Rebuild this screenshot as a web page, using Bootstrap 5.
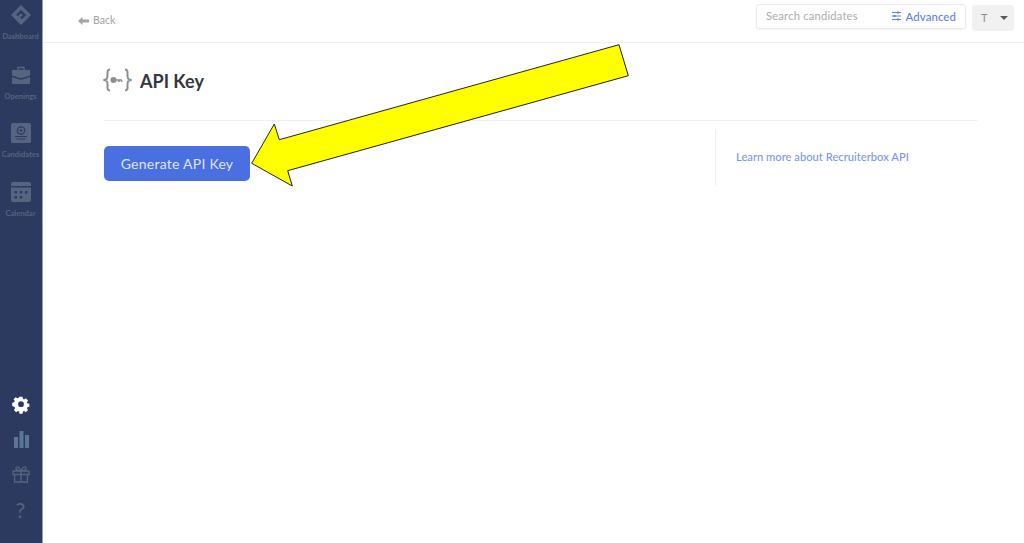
<!DOCTYPE html>
<html lang="en">
<head>
    <meta charset="UTF-8">
    <meta name="viewport" content="width=device-width, initial-scale=1.0">
    <title>API Key</title>
    <link href="https://cdn.jsdelivr.net/npm/bootstrap@5.3.0/dist/css/bootstrap.min.css" rel="stylesheet">
    <style>
        html, body { height: 100%; }
        body { font-family: "Lato", "Liberation Sans", sans-serif; background: #fff; overflow: hidden; }
        .app-shell { height: 543px; position: relative; }
        .side-nav { width: 43px; background: #2b3a5e; border-right: 1px solid #8fa0c4; padding-top: 5px; }
        .side-item { color: #56647f; font-size: 7.6px; font-weight: 700; line-height: 9px; text-align: center; width: 41px; white-space: nowrap; }
        .side-item svg { display: block; margin: 0 auto 7px; }
        .side-item.gap-one { margin-top: 24px; }
        .side-item.gap-two { margin-top: 22px; }
        .side-item.gap-three { margin-top: 23px; }
        .side-foot { padding: 0 1px 22px 0; gap: 15px; }
        .side-foot svg { display: block; margin: 0 auto; }
        .side-help { color: #56647f; font-size: 22px; line-height: 22px; text-align: center; width: 41px; }
        .top-strip { height: 43px; border-bottom: 1px solid #eeeff1; padding: 4px 10px 0 35px; }
        .back-link { color: #a3a5a8; font-size: 10.5px; margin-top: 10px; height: 14px; }
        .search-box { width: 210px; height: 25px; border: 1px solid #e8e9eb; border-radius: 3px; padding: 0 9px; font-size: 11.2px; box-shadow: 0 1px 1px #f4f4f5; }
        .search-hint { color: #a9abae; letter-spacing: .2px; }
        .advanced-link { color: #5f81e6; font-weight: 500; letter-spacing: .1px; font-size: 11.4px; }
        .user-menu { width: 42px; height: 26px; margin-left: 6px; margin-top: 1px; background: #f1f1f2; border-radius: 3px; color: #8b8d90; font-size: 11px; padding: 0 6px 0 9px; }
        .caret-down { width: 0; height: 0; border-left: 4.5px solid transparent; border-right: 4.5px solid transparent; border-top: 4.5px solid #57595c; }
        .page-body { padding: 0 46px 0 61px; }
        .title-row { height: 78px; border-bottom: 1px solid #eeeff1; }
        .title-icon { margin-left: -1px; margin-bottom: 4px; }
        .title-text { color: #33383f; font-size: 18px; font-weight: 700; margin: 0 0 0 8px; }
        .action-row { padding-top: 9px; }
        .action-main { width: 611px; padding-top: 16px; }
        .gen-btn { width: 146px; height: 35px; background: #4a6fe0; border: 0; border-radius: 5px; color: #dfe6fa; font-size: 14px; padding: 0 0 1px; letter-spacing: .25px; }
        .action-aside { height: 56px; border-left: 1px solid #eeeff1; padding: 0 0 2px 20px; }
        .learn-link { color: #7d97ea; font-size: 11.2px; font-weight: 500; text-decoration: none; }
        .arrow-mark { position: absolute; left: 0; top: 0; pointer-events: none; }
    </style>
</head>
<body>
    <div class="app-shell d-flex">
        <!-- sidebar -->
        <nav class="side-nav d-flex flex-column flex-shrink-0">
            <div class="side-item">
                <svg width="20" height="20" viewBox="0 0 20 20"><path fill="#56647f" d="M10 0 20 10 10 20 0 10Z"/><path fill="none" stroke="#2b3a5e" stroke-width="2.4" d="M6 10.500 10 6.500 13.500 10 10 13.500"/></svg>
                Dashboard
            </div>
            <div class="side-item gap-one">
                <svg width="20" height="20" viewBox="0 0 20 20"><path fill="none" stroke="#56647f" stroke-width="1.400" d="M7 5V2.500h6V5"/><path fill="#56647f" d="M1 5h18v5.500L11.500 13h-3L1 10.500ZM1 12l7.500 2.400h3L19 12v6a1 1 0 0 1-1 1H2a1 1 0 0 1-1-1Z"/></svg>
                Openings
            </div>
            <div class="side-item gap-two">
                <svg width="20" height="20" viewBox="0 0 20 20"><rect width="20" height="20" rx="1.500" fill="#56647f"/><circle cx="10" cy="7.500" r="3.700" fill="none" stroke="#2b3a5e" stroke-width="1.200"/><circle cx="10" cy="7.500" r="1.300" fill="#2b3a5e"/><path stroke="#2b3a5e" stroke-width="1.200" d="M4 13.500h12M5.500 16h9"/></svg>
                Candidates
            </div>
            <div class="side-item gap-three">
                <svg width="20" height="20" viewBox="0 0 20 20"><path fill="#56647f" d="M2 0h16a2 2 0 0 1 2 2v2H0V2a2 2 0 0 1 2-2ZM0 5.500h20V18a2 2 0 0 1-2 2H2a2 2 0 0 1-2-2Z"/><path fill="#2b3a5e" d="M3.500 9h2.500v2.500H3.500ZM8.700 9h2.500v2.500H8.700ZM14 9h2.500v2.500H14ZM3.500 14h2.500v2.500H3.500ZM8.700 14h2.500v2.500H8.700Z"/></svg>
                Calendar
            </div>
            <div class="side-foot d-flex flex-column mt-auto">
                <svg width="20" height="20" viewBox="0 0 20 20"><path fill="#fff" fill-rule="evenodd" d="M8.300 2h3.400l.4 2.300 1.300.6 2-1.300 2.400 2.400-1.300 2 .5 1.300 2.300.4v3.400l-2.300.4-.5 1.300 1.300 2-2.400 2.400-2-1.300-1.300.5-.4 2.300H8.300l-.4-2.300-1.300-.5-2 1.300-2.400-2.400 1.300-2-.5-1.300L.2 11.900V8.500l2.300-.4.500-1.300-1.300-2 2.400-2.400 2 1.300 1.300-.6ZM10 7a3.200 3.200 0 1 0 0 6.400A3.200 3.200 0 0 0 10 7Z" transform="translate(1 1) scale(.9)"/></svg>
                <svg width="20" height="20" viewBox="0 0 20 20"><path fill="#5c7596" d="M3 8h4v11H3ZM8.500 2h4v17h-4ZM14 6h4v13h-4Z"/></svg>
                <svg width="20" height="20" viewBox="0 0 20 20" fill="none" stroke="#56647f" stroke-width="1.300"><path d="M2 7h16v3.500H2ZM3.500 10.500V18h13v-7.500M10 7v11M10 7C8 2 4.500 2 5 4.500 5.300 6 8 7 10 7ZM10 7c2-5 5.500-5 5-2.500C14.700 6 12 7 10 7Z"/></svg>
                <div class="side-help">?</div>
            </div>
        </nav>

        <div class="flex-grow-1">
            <!-- top bar -->
            <header class="top-strip d-flex justify-content-between">
                <div class="back-link d-flex align-items-center gap-1">
                    <svg width="11" height="8" viewBox="0 0 11 8"><path fill="#a3a5a8" d="M0 4 4.500 0v2.500H11v3H4.500V8Z"/></svg>
                    Back
                </div>
                <div class="d-flex align-items-start">
                    <div class="search-box d-flex align-items-center justify-content-between">
                        <span class="search-hint">Search candidates</span>
                        <span class="advanced-link d-flex align-items-center gap-1">
                            <svg width="11" height="10" viewBox="0 0 11 10" fill="none" stroke="#5f81e6" stroke-width="1"><path d="M1 1.500h9M1 5h9M1 8.500h9"/><path stroke-width="2" d="M7 .5v2M3.500 4v2M7 7.500v2"/></svg>
                            Advanced
                        </span>
                    </div>
                    <div class="user-menu d-flex align-items-center justify-content-between">
                        <span>T</span>
                        <span class="caret-down"></span>
                    </div>
                </div>
            </header>

            <!-- content -->
            <main class="page-body">
                <div class="title-row d-flex align-items-center">
                    <svg class="title-icon" width="29" height="24" viewBox="0 0 29 24" fill="none" stroke="#8b8d8f" stroke-width="2"><path d="M7 1.500C4 1.500 4.500 3.500 4.500 7S4 11 1.500 12C4 13 4.500 13.500 4.500 17s-.5 5.500 2.500 5.500M22 1.500c3 0 2.500 2 2.500 5.500s.5 4 3 5c-2.500 1-3 1.500-3 5s.5 5.500-2.500 5.500"/><circle cx="10.500" cy="12" r="3" fill="#8b8d8f" stroke="none"/><path stroke-width="1.600" d="M12 12h7M16 12v2M18.500 12v2"/></svg>
                    <h1 class="title-text">API Key</h1>
                </div>
                <div class="action-row d-flex">
                    <div class="action-main">
                        <button type="button" class="btn gen-btn">Generate API Key</button>
                    </div>
                    <div class="action-aside d-flex align-items-center">
                        <a href="#" class="learn-link">Learn more about Recruiterbox API</a>
                    </div>
                </div>
            </main>
        </div>

        <!-- yellow annotation arrow -->
        <svg class="arrow-mark" width="1024" height="543" viewBox="0 0 1024 543">
            <path fill="#ffff00" stroke="#222" stroke-width="1" stroke-linejoin="miter" d="M251.700 163.300 274.300 124 279.300 139.700 619 44.700 628.300 75.700 287.700 170.700 292.300 186Z"/>
        </svg>
    </div>
    <script src="https://cdn.jsdelivr.net/npm/bootstrap@5.3.0/dist/js/bootstrap.bundle.min.js"></script>
</body>
</html>
